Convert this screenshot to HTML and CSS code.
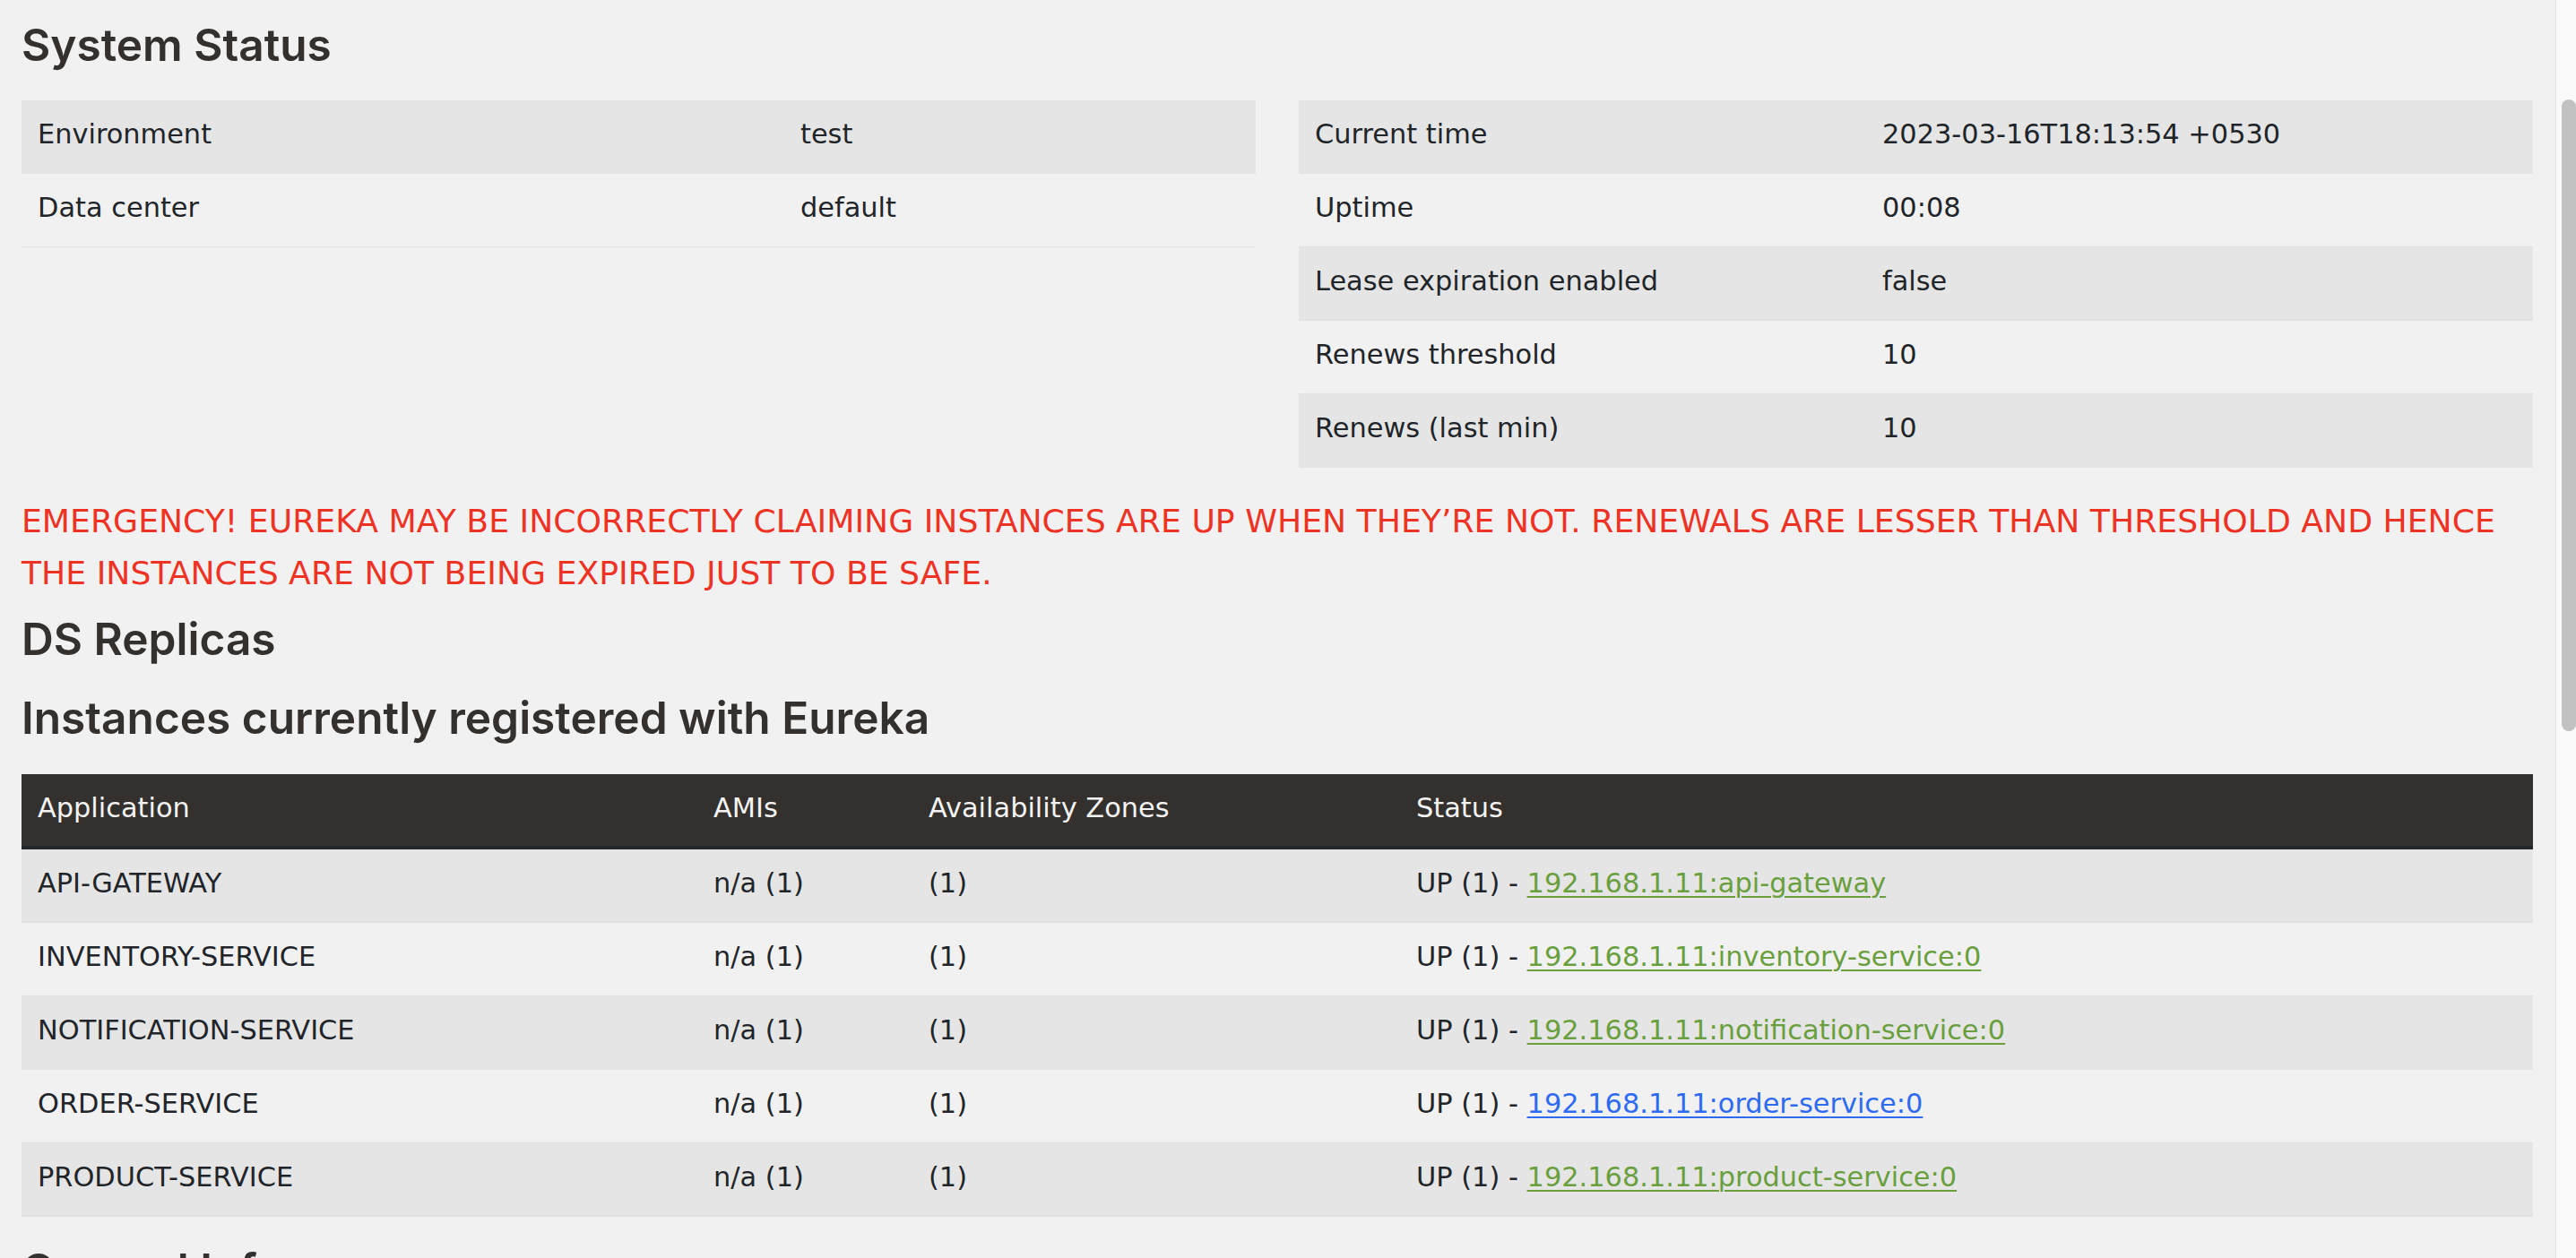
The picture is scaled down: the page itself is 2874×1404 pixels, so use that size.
FILE: index.html
```html
<!DOCTYPE html>
<html lang="en">
<head>
<meta charset="utf-8">
<title>Eureka</title>
<link rel="stylesheet" href="styles.css">
</head>
<body>
<div class="frame">
  <main class="page">
    <h1 class="heading heading-system">System Status</h1>
    <div class="status-grid">
      <table class="table info-table info-left">
        <tbody>
          <tr><td>Environment</td><td>test</td></tr>
          <tr><td>Data center</td><td>default</td></tr>
        </tbody>
      </table>
      <table class="table info-table info-right">
        <tbody>
          <tr><td>Current time</td><td>2023-03-16T18:13:54 +0530</td></tr>
          <tr><td>Uptime</td><td>00:08</td></tr>
          <tr><td>Lease expiration enabled</td><td>false</td></tr>
          <tr><td>Renews threshold</td><td>10</td></tr>
          <tr><td>Renews (last min)</td><td>10</td></tr>
        </tbody>
      </table>
    </div>
    <p class="emergency">EMERGENCY! EUREKA MAY BE INCORRECTLY CLAIMING INSTANCES ARE UP WHEN THEY’RE NOT. RENEWALS ARE LESSER THAN THRESHOLD AND HENCE THE INSTANCES ARE NOT BEING EXPIRED JUST TO BE SAFE.</p>
    <h1 class="heading heading-replicas">DS Replicas</h1>
    <h1 class="heading heading-instances">Instances currently registered with Eureka</h1>
    <table class="table instances">
      <thead>
        <tr><th class="c-app">Application</th><th class="c-ami">AMIs</th><th class="c-az">Availability Zones</th><th class="c-status">Status</th></tr>
      </thead>
      <tbody>
        <tr><td>API-GATEWAY</td><td>n/a (1)</td><td>(1)</td><td>UP (1) - <a href="#" class="link">192.168.1.11:api-gateway</a></td></tr>
        <tr><td>INVENTORY-SERVICE</td><td>n/a (1)</td><td>(1)</td><td>UP (1) - <a href="#" class="link">192.168.1.11:inventory-service:0</a></td></tr>
        <tr><td>NOTIFICATION-SERVICE</td><td>n/a (1)</td><td>(1)</td><td>UP (1) - <a href="#" class="link">192.168.1.11:notification-service:0</a></td></tr>
        <tr><td>ORDER-SERVICE</td><td>n/a (1)</td><td>(1)</td><td>UP (1) - <a href="#" class="link link-active">192.168.1.11:order-service:0</a></td></tr>
        <tr><td>PRODUCT-SERVICE</td><td>n/a (1)</td><td>(1)</td><td>UP (1) - <a href="#" class="link">192.168.1.11:product-service:0</a></td></tr>
      </tbody>
    </table>
    <h1 class="heading heading-general">General Info</h1>
  </main>
  <div class="scrollbar"><div class="scroll-thumb"></div></div>
</div>
</body>
</html>
```
FILE: styles.css
```css
html, body {
  margin: 0;
  padding: 0;
  height: 1404px;
  overflow: hidden;
  background: #f1f1f1;
}

body {
  font-family: "DejaVu Sans", "Noto Sans", sans-serif;
  font-size: 30.4px;
  color: #212529;
}

.frame {
  display: flex;
  height: 1404px;
}

.page {
  flex: 1;
  min-width: 0;
  padding: 20px 25px 0 24px;
  overflow: hidden;
}

.scrollbar {
  width: 16px;
  flex: none;
  background: #fafafa;
  border-left: 1px solid #e4e4e4;
  padding: 111px 0 0 6px;
}

.scroll-thumb {
  width: 16px;
  height: 705px;
  background: #c2c2c2;
  border-radius: 8px;
}

.heading {
  font-family: "Inter", "DejaVu Sans", sans-serif;
  font-weight: 600;
  font-size: 49.6px;
  line-height: 60px;
  color: #34302d;
  margin: 0;
}

.heading-system { margin-bottom: 32px; }
.heading-replicas { margin-top: 14px; margin-bottom: 28px; }
.heading-instances { margin-bottom: 33px; }
.heading-general { margin-top: 29px; }

.status-grid {
  display: grid;
  grid-template-columns: 1fr 1fr;
  column-gap: 48px;
  align-items: start;
}

.table {
  width: 100%;
  border-collapse: collapse;
  table-layout: fixed;
}

.table td, .table th {
  padding: 17px 18px 23px;
  line-height: 41px;
  text-align: left;
  vertical-align: top;
  white-space: nowrap;
  font-weight: 400;
}

.table tbody tr {
  border-bottom: 1px solid #dee2e6;
}

.table tbody tr:nth-child(odd) {
  background: #e5e5e5;
}

.info-left td:first-child { width: 815px; }
.info-right td:first-child { width: 597px; }

.emergency {
  margin: 31px 0 0;
  font-size: 36.2px;
  line-height: 58px;
  color: #ee3224;
}

.instances thead tr {
  background: #34302d;
}

.instances th {
  color: #f3f3f3;
  padding-bottom: 22px;
  border-bottom: 4px solid #24272b;
}

.c-app { width: 718px; }
.c-ami { width: 204px; }
.c-az { width: 508px; }

.link {
  color: #6a9f3e;
  text-decoration: underline;
  text-decoration-thickness: 2px;
  text-underline-offset: 4px;
}

.link-active {
  color: #2e6bf1;
}
```
